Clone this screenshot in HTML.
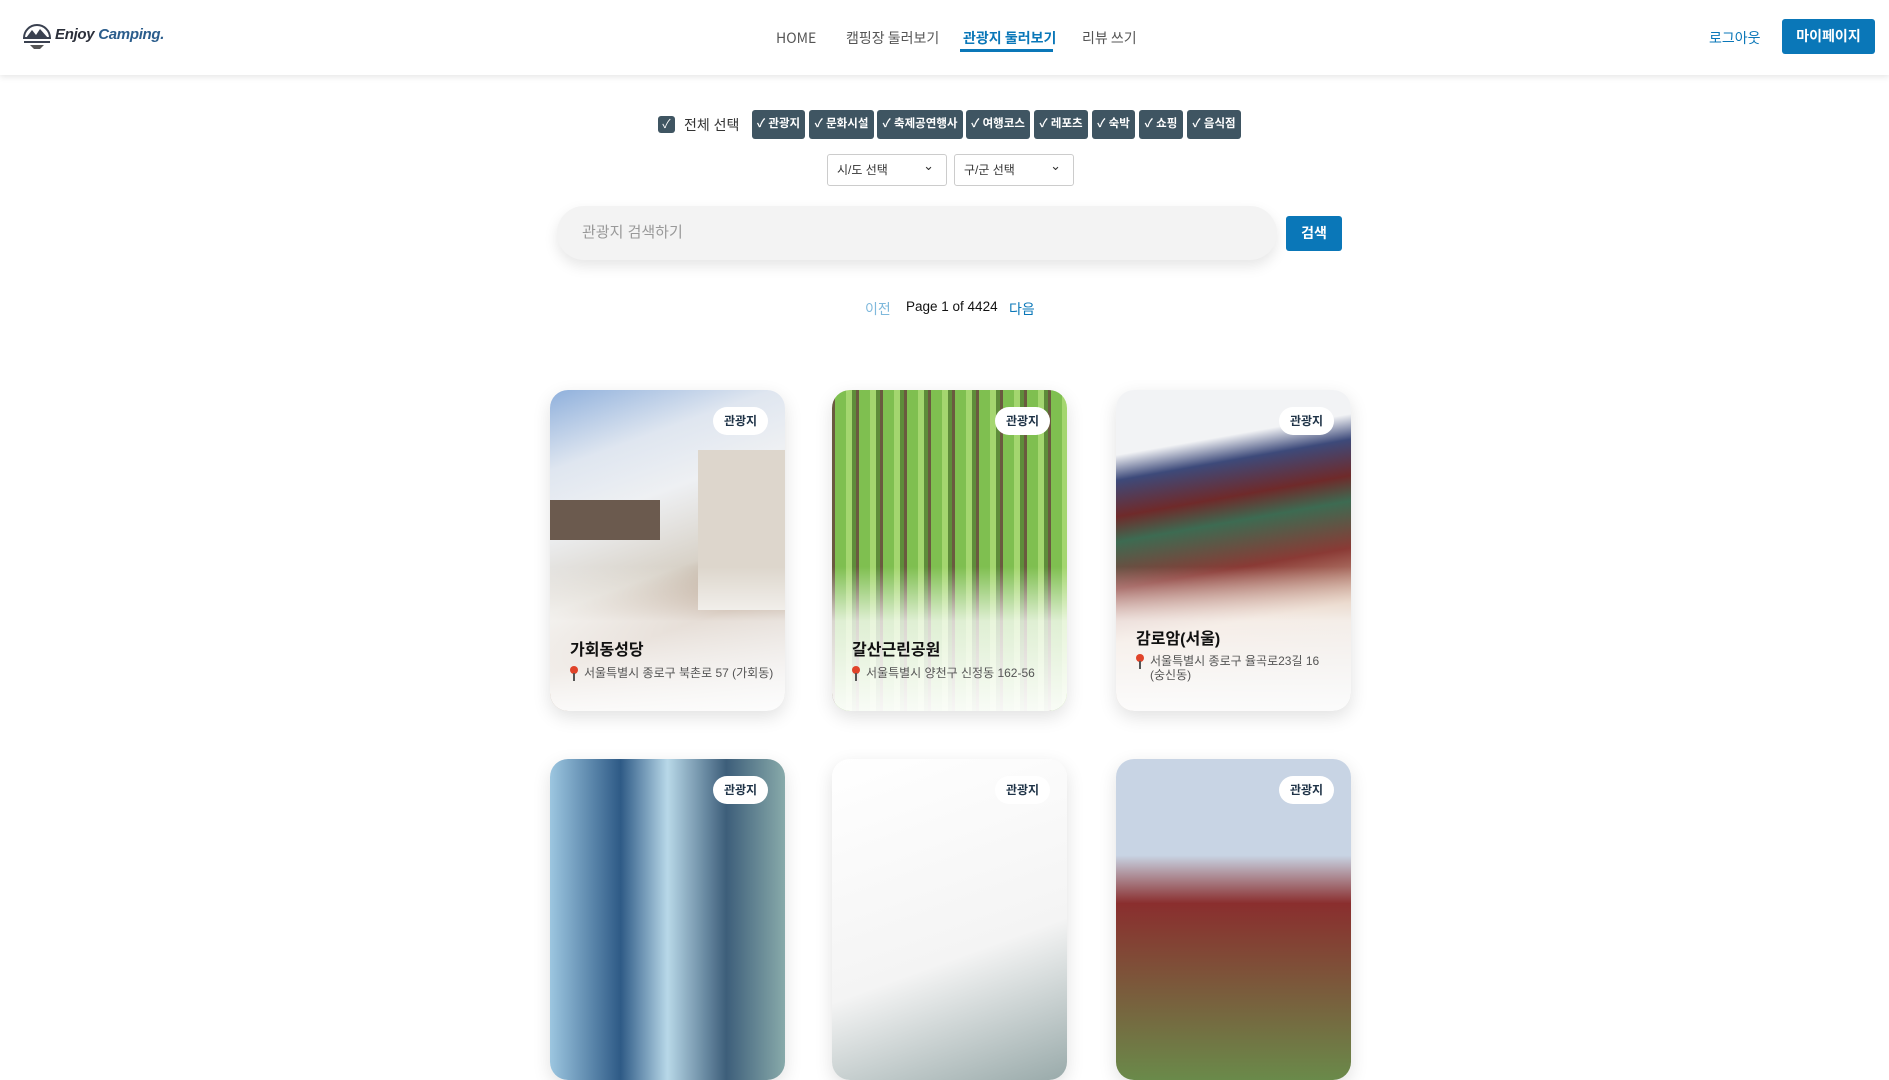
<!DOCTYPE html>
<html><head><meta charset="utf-8"><style>
*{box-sizing:border-box;margin:0;padding:0}
body{width:1889px;height:863px;overflow:hidden;background:#fff;font-family:"Liberation Sans","Noto Sans CJK KR",sans-serif;color:#222;position:relative}
.abs{position:absolute}
header{position:absolute;left:0;top:0;width:1889px;height:75px;background:#fff;box-shadow:0 2px 6px rgba(0,0,0,.1)}
.nav{font-size:14px;color:#555;top:28px;line-height:20px;font-family:"Noto Sans CJK KR",sans-serif}
.chip{position:absolute;top:110px;height:29px;background:#3f5562;color:#fff;border-radius:3px;font-size:11.5px;font-weight:bold;line-height:29px;text-align:center;white-space:nowrap}
.sel{position:absolute;top:154px;height:32px;width:120px;border:1px solid #ccc;border-radius:3px;font-size:12px;color:#333;line-height:30px;padding-left:9px}
.sel:after{content:"⌄";position:absolute;right:12px;top:-4px;font-size:13px}
.card{position:absolute;width:235px;height:321px;border-radius:18px;overflow:hidden;box-shadow:0 6px 18px rgba(0,0,0,.12);background:#fff}
.img{position:absolute;inset:0}
.fade{position:absolute;left:0;right:0;top:0;bottom:0;background:linear-gradient(to bottom,rgba(255,255,255,0) 0%,rgba(255,255,255,0) 55%,rgba(255,255,255,.75) 72%,rgba(255,255,255,.95) 100%)}
.badge{position:absolute;left:163px;top:17px;width:55px;height:28px;border-radius:14px;background:#fff;font-size:12px;font-weight:bold;color:#1f3347;text-align:center;line-height:28px}
.t{position:absolute;left:20px;font-size:16px;font-weight:bold;color:#111}
.a{position:absolute;left:20px;font-size:12px;color:#555;padding-left:14px;line-height:14px}
.a:before{content:"";position:absolute;left:0;top:0;width:8px;height:8px;border-radius:50%;background:#e0432a}
.a:after{content:"";position:absolute;left:3px;top:7px;width:2px;height:8px;background:#555}
</style></head><body>
<header>
<svg class="abs" style="left:22px;top:22px" width="30" height="28" viewBox="0 0 30 28"><path d="M2 16 A13 13 0 0 1 28 16 Z" fill="#fff" stroke="#3a4150" stroke-width="2"/><path d="M4 16 L10 8 L14 13 L18 7 L26 16Z" fill="#3a4150"/><rect x="2" y="19" width="26" height="2" fill="#3a4150"/><path d="M8 23 H22 L18 27 H12Z" fill="#555"/></svg>
<div class="abs" style="left:55px;top:26px;font-size:15px;font-weight:bold;font-style:italic;color:#2b2f3a;letter-spacing:-.3px">Enjoy <span style="color:#2b5d8c">Camping.</span></div>
<div class="abs nav" style="left:776px">HOME</div>
<div class="abs nav" style="left:846px">캠핑장 둘러보기</div>
<div class="abs nav" style="left:963px;color:#0a77b8;font-weight:bold">관광지 둘러보기</div>
<div class="abs" style="left:960px;top:49px;width:93px;height:3px;background:#0a77b8"></div>
<div class="abs nav" style="left:1082px">리뷰 쓰기</div>
<div class="abs nav" style="left:1709px;color:#0a77b8">로그아웃</div>
<div class="abs" style="left:1782px;top:19px;width:93px;height:35px;background:#0a77b8;border-radius:3px;color:#fff;font-size:14px;font-weight:bold;text-align:center;line-height:35px">마이페이지</div>
</header>
<div class="abs" style="left:658px;top:116px;width:17px;height:17px;background:#3f5562;border-radius:3px;color:#fff;font-size:12px;text-align:center;line-height:17px">✓</div>
<div class="abs" style="left:684px;top:115px;font-size:14px;color:#333">전체 선택</div>
<div class="chip" style="left:752px;width:53px">✓ 관광지</div>
<div class="chip" style="left:809px;width:65px">✓ 문화시설</div>
<div class="chip" style="left:877px;width:86px">✓ 축제공연행사</div>
<div class="chip" style="left:966px;width:64px">✓ 여행코스</div>
<div class="chip" style="left:1034px;width:54px">✓ 레포츠</div>
<div class="chip" style="left:1092px;width:43px">✓ 숙박</div>
<div class="chip" style="left:1139px;width:44px">✓ 쇼핑</div>
<div class="chip" style="left:1187px;width:54px">✓ 음식점</div>
<div class="sel" style="left:827px">시/도 선택</div>
<div class="sel" style="left:954px">구/군 선택</div>
<div class="abs" style="left:557px;top:206px;width:720px;height:54px;border-radius:27px;background:#f3f3f3;box-shadow:0 6px 14px rgba(0,0,0,.1);font-size:15px;color:#999;line-height:54px;padding-left:25px">관광지 검색하기</div>
<div class="abs" style="left:1286px;top:216px;width:56px;height:35px;background:#0a77b8;border-radius:3px;color:#fff;font-size:14px;font-weight:bold;text-align:center;line-height:35px">검색</div>
<div class="abs" style="left:865px;top:299px;font-size:14px;color:#7fb9dc">이전</div>
<div class="abs" style="left:906px;top:299px;font-size:13.5px;color:#111">Page 1 of 4424</div>
<div class="abs" style="left:1009px;top:299px;font-size:14px;color:#0a77b8">다음</div>

<div class="card" style="left:550px;top:390px">
<div class="img" style="background:linear-gradient(160deg,#8fb0dc 0%,#dfe6f0 20%,#eef0f3 35%,#d8d2c8 55%,#9b7a5e 70%,#ccc 100%)"></div>
<div class="abs" style="left:0;top:110px;width:110px;height:40px;background:#6b5a4e"></div>
<div class="abs" style="left:148px;top:60px;width:87px;height:160px;background:#ddd6cc"></div>
<div class="fade"></div><div class="badge">관광지</div>
<div class="t" style="top:246px">가회동성당</div>
<div class="a" style="top:276px">서울특별시 종로구 북촌로 57 (가회동)</div></div>

<div class="card" style="left:832px;top:390px">
<div class="img" style="background:repeating-linear-gradient(90deg,#6a5a3f 0 3px,#7fbf50 3px 14px,#a4d66f 14px 20px,#5e8c3a 20px 24px)"></div>
<div class="fade"></div><div class="badge">관광지</div>
<div class="t" style="top:246px">갈산근린공원</div>
<div class="a" style="top:276px">서울특별시 양천구 신정동 162-56</div></div>

<div class="card" style="left:1116px;top:390px">
<div class="img" style="background:linear-gradient(170deg,#f2f3f5 0%,#f2f3f5 18%,#3d4a7a 25%,#6f2a2a 35%,#3d6b52 42%,#8a3a35 55%,#d8b8a0 70%,#bbb 100%)"></div>
<div class="fade"></div><div class="badge">관광지</div>
<div class="t" style="top:235px">감로암(서울)</div>
<div class="a" style="top:264px;width:200px">서울특별시 종로구 율곡로23길 16 (숭신동)</div></div>

<div class="card" style="left:550px;top:759px">
<div class="img" style="background:linear-gradient(90deg,#9cc6e0 0%,#2e5a86 30%,#b8d8e8 50%,#3d5e7a 75%,#8aa 100%)"></div><div class="badge">관광지</div></div>
<div class="card" style="left:832px;top:759px">
<div class="img" style="background:linear-gradient(160deg,#fff 0%,#f4f4f4 60%,#9aa 100%)"></div><div class="badge">관광지</div></div>
<div class="card" style="left:1116px;top:759px">
<div class="img" style="background:linear-gradient(180deg,#c8d4e4 0%,#c8d4e4 30%,#8a2e2e 45%,#6a8a4a 100%)"></div><div class="badge">관광지</div></div>
</body></html>
